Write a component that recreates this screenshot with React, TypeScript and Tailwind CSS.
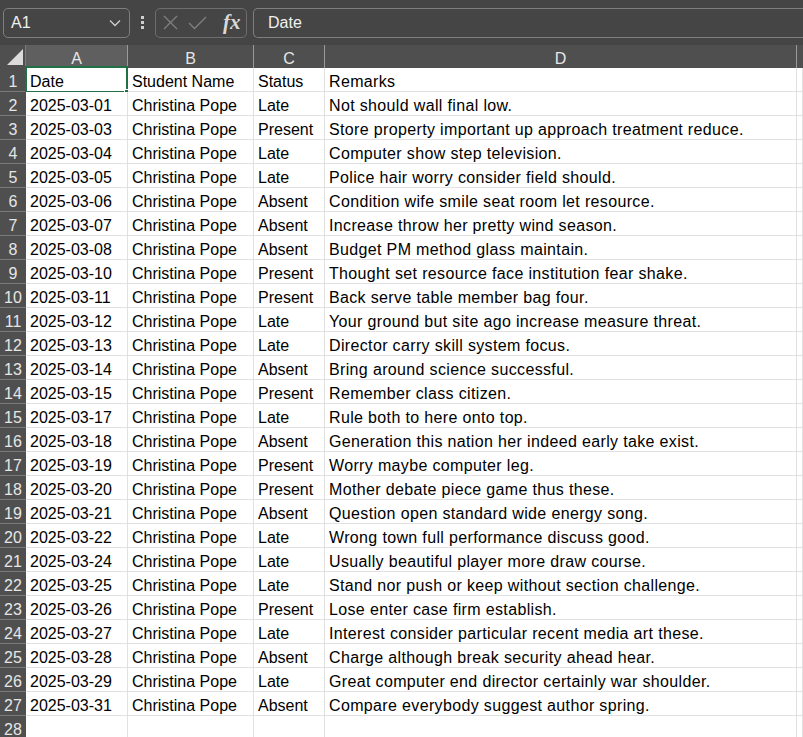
import React from "react";

const rows: [string, string, string, string][] = [
  ["2025-03-01", "Christina Pope", "Late", "Not should wall final low."],
  ["2025-03-03", "Christina Pope", "Present", "Store property important up approach treatment reduce."],
  ["2025-03-04", "Christina Pope", "Late", "Computer show step television."],
  ["2025-03-05", "Christina Pope", "Late", "Police hair worry consider field should."],
  ["2025-03-06", "Christina Pope", "Absent", "Condition wife smile seat room let resource."],
  ["2025-03-07", "Christina Pope", "Absent", "Increase throw her pretty wind season."],
  ["2025-03-08", "Christina Pope", "Absent", "Budget PM method glass maintain."],
  ["2025-03-10", "Christina Pope", "Present", "Thought set resource face institution fear shake."],
  ["2025-03-11", "Christina Pope", "Present", "Back serve table member bag four."],
  ["2025-03-12", "Christina Pope", "Late", "Your ground but site ago increase measure threat."],
  ["2025-03-13", "Christina Pope", "Late", "Director carry skill system focus."],
  ["2025-03-14", "Christina Pope", "Absent", "Bring around science successful."],
  ["2025-03-15", "Christina Pope", "Present", "Remember class citizen."],
  ["2025-03-17", "Christina Pope", "Late", "Rule both to here onto top."],
  ["2025-03-18", "Christina Pope", "Absent", "Generation this nation her indeed early take exist."],
  ["2025-03-19", "Christina Pope", "Present", "Worry maybe computer leg."],
  ["2025-03-20", "Christina Pope", "Present", "Mother debate piece game thus these."],
  ["2025-03-21", "Christina Pope", "Absent", "Question open standard wide energy song."],
  ["2025-03-22", "Christina Pope", "Late", "Wrong town full performance discuss good."],
  ["2025-03-24", "Christina Pope", "Late", "Usually beautiful player more draw course."],
  ["2025-03-25", "Christina Pope", "Late", "Stand nor push or keep without section challenge."],
  ["2025-03-26", "Christina Pope", "Present", "Lose enter case firm establish."],
  ["2025-03-27", "Christina Pope", "Late", "Interest consider particular recent media art these."],
  ["2025-03-28", "Christina Pope", "Absent", "Charge although break security ahead hear."],
  ["2025-03-29", "Christina Pope", "Late", "Great computer end director certainly war shoulder."],
  ["2025-03-31", "Christina Pope", "Absent", "Compare everybody suggest author spring."],
];

const font = { fontFamily: '"Liberation Sans", Arial, sans-serif' };

function Cell({ children, first, wide }: { children?: React.ReactNode; first?: boolean; wide?: boolean }) {
  return (
    <div
      className={`relative h-[24px] border-r border-b border-[#e1e1e1] bg-white pl-[4px] flex items-center overflow-visible whitespace-nowrap text-[16px] text-black leading-none pt-[4px] ${
        wide ? "tracking-[0.35px]" : ""
      }`}
    >
      {children}
      {first && (
        <div className="absolute left-[-1px] top-[-2px] right-[-1px] bottom-[-2px] border-2 border-[#1f7145] pointer-events-none">
          <div className="absolute right-[-4px] bottom-[-4px] w-[6px] h-[6px] bg-[#1f7145] border border-white" />
        </div>
      )}
    </div>
  );
}

function RowHead({ n }: { n: number }) {
  return (
    <div className="h-[24px] bg-[#4f4f4f] border-b border-[#7a7a7a] flex items-center justify-center text-[16px] text-[#e6e6e6] leading-none pt-[4px]">
      {n}
    </div>
  );
}

export default function App() {
  const grid = "grid grid-cols-[26px_102px_126px_71px_472px_1fr]";
  return (
    <div className="w-[803px] h-[737px] overflow-hidden bg-white" style={font}>
      {/* formula bar */}
      <div className="h-[45px] bg-[#454545] flex items-center pl-[3px] gap-0">
        <div className="w-[127px] h-[30px] rounded-[5px] border border-[#7e7e7e] flex items-center justify-between pl-[7px] pr-[8px] text-[16px] text-[#f0f0f0]">
          <span>A1</span>
          <svg width="12" height="8" viewBox="0 0 12 8" fill="none">
            <path d="M1 1.5 L6 6.5 L11 1.5" stroke="#cfcfcf" strokeWidth="1.3" />
          </svg>
        </div>
        <div className="w-[25px] flex flex-col items-center gap-[2px]">
          <div className="w-[3px] h-[3px] bg-[#cfcfcf]" />
          <div className="w-[3px] h-[3px] bg-[#cfcfcf]" />
          <div className="w-[3px] h-[3px] bg-[#cfcfcf]" />
        </div>
        <div className="w-[92px] h-[30px] rounded-[5px] border border-[#6e6e6e] flex items-center pl-[7px] gap-[10px]">
          <svg width="15" height="15" viewBox="0 0 15 15" fill="none">
            <path d="M1 1 L14 14 M14 1 L1 14" stroke="#808080" strokeWidth="1.3" />
          </svg>
          <svg width="19" height="14" viewBox="0 0 19 14" fill="none">
            <path d="M1 7 L6.5 12.5 L18 1" stroke="#808080" strokeWidth="1.3" />
          </svg>
          <span
            className="text-[21px] italic font-bold text-[#d8d8d8] leading-none ml-[6px]"
            style={{ fontFamily: '"Liberation Serif", "Times New Roman", serif' }}
          >
            fx
          </span>
        </div>
        <div className="ml-[6px] flex-1 h-[30px] rounded-l-[5px] border border-r-0 border-[#7e7e7e] flex items-center pl-[14px] text-[16px] text-[#f0f0f0]">
          Date
        </div>
      </div>
      {/* column headers */}
      <div className={`${grid} h-[23px] bg-[#4f4f4f] text-[16px] text-[#e6e6e6]`}>
        <div className="relative border-r border-[#7a7a7a]">
          <svg className="absolute left-[7px] top-[4px]" width="16" height="16" viewBox="0 0 16 16">
            <path d="M16 0 L16 16 L0 16 Z" fill="#dcdcdc" />
          </svg>
        </div>
        <div className="bg-[#5f5f5f] border-r border-[#9a9a9a] flex items-center justify-center pt-[2px]">A</div>
        <div className="border-r border-[#9a9a9a] flex items-center justify-center pt-[2px]">B</div>
        <div className="border-r border-[#9a9a9a] flex items-center justify-center pt-[2px]">C</div>
        <div className="border-r border-[#9a9a9a] flex items-center justify-center pt-[2px]">D</div>
        <div />
      </div>
      {/* rows */}
      <div className={grid}>
        <RowHead n={1} />
        <Cell first>Date</Cell>
        <Cell>Student Name</Cell>
        <Cell>Status</Cell>
        <Cell wide>Remarks</Cell>
        <Cell />
        {rows.map((r, i) => (
          <React.Fragment key={i}>
            <RowHead n={i + 2} />
            <Cell>{r[0]}</Cell>
            <Cell>{r[1]}</Cell>
            <Cell>{r[2]}</Cell>
            <Cell wide>{r[3]}</Cell>
            <Cell />
          </React.Fragment>
        ))}
        <RowHead n={28} />
        <Cell />
        <Cell />
        <Cell />
        <Cell />
        <Cell />
      </div>
    </div>
  );
}
